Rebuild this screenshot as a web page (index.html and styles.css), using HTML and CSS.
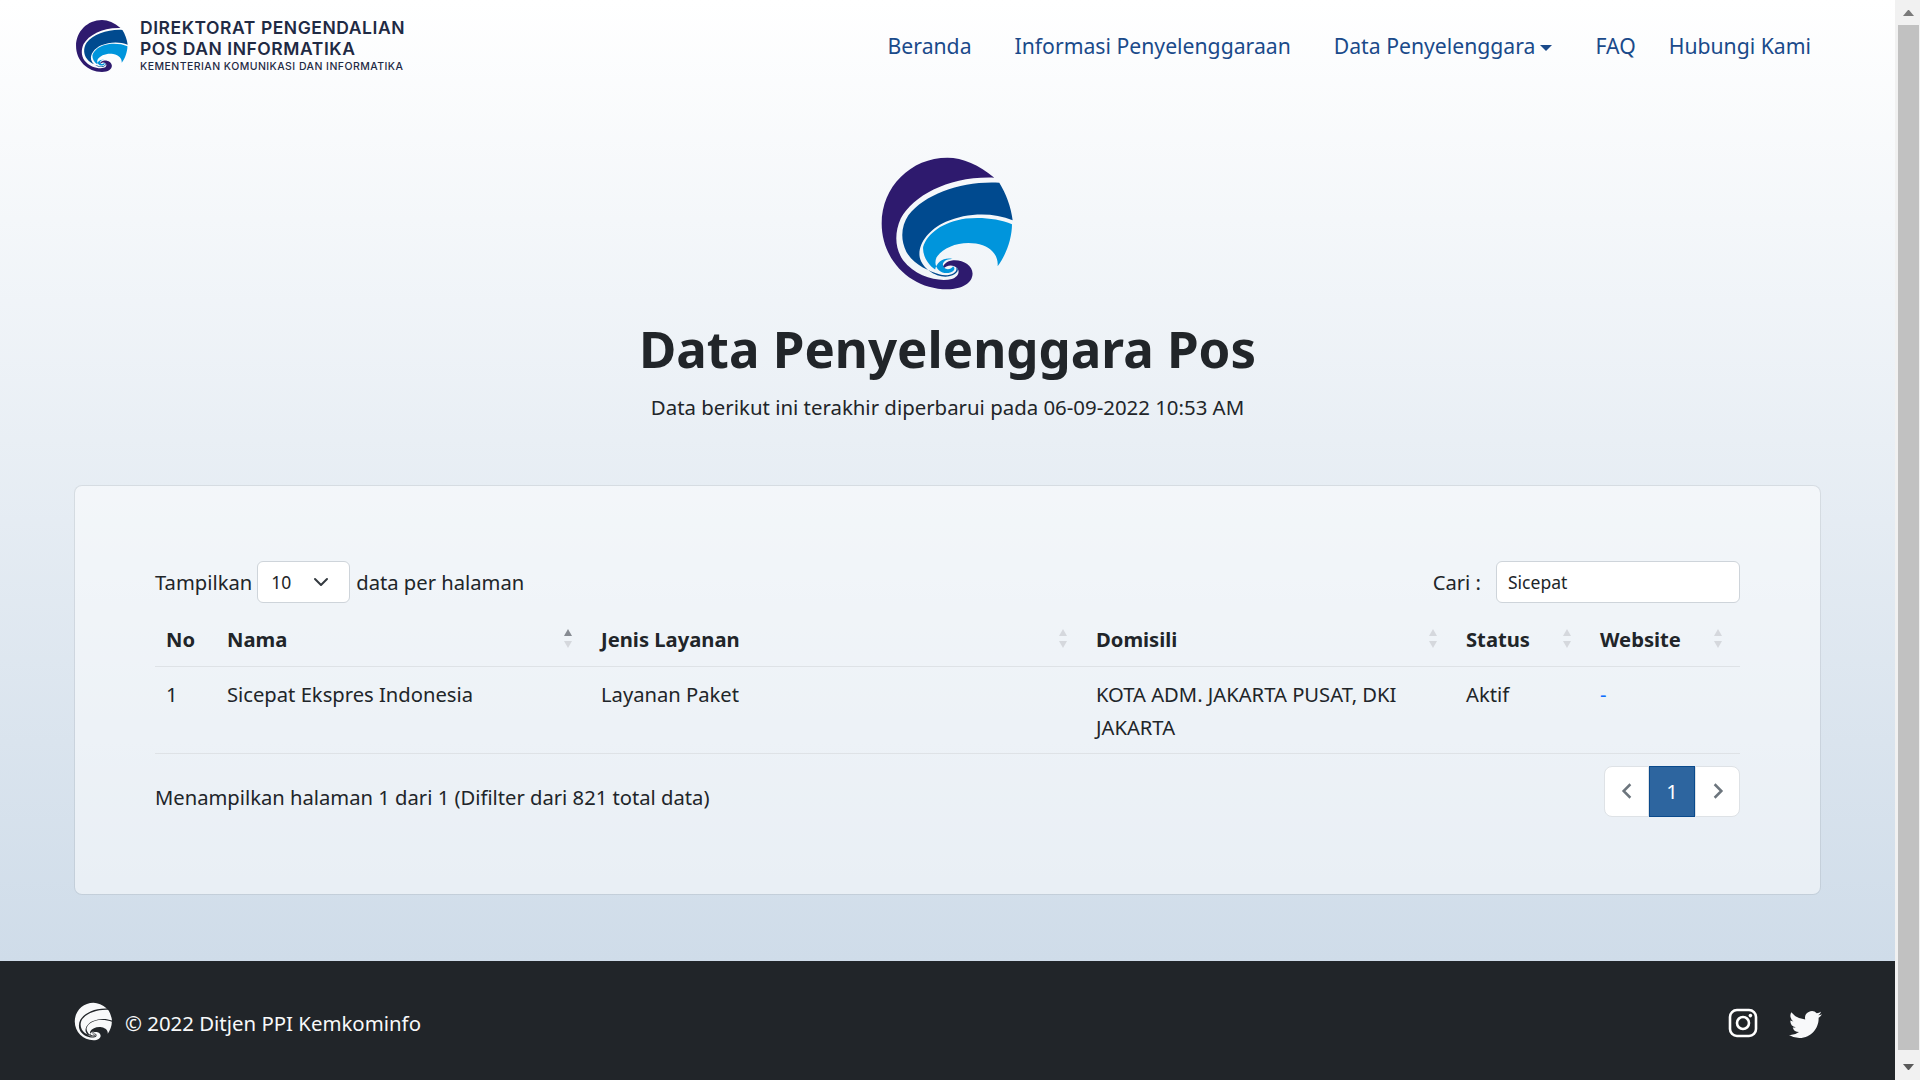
FILE: index.html
```html
<!DOCTYPE html>
<html lang="id">
<head>
  <meta charset="UTF-8" />
  <meta name="viewport" content="width=device-width, initial-scale=1.0"/>
  <title>Data Penyelenggara Pos</title>
  <link rel="stylesheet" href="styles.css">
</head>
<body>
  <svg class="defs" width="0" height="0">
    <symbol id="kominfo" viewBox="60 45 410 410">
      <path class="mark-a" d="M405 113C360 75 310 53 265 53C155 53 68 140 68 250C68 360 155 447 265 447C310 447 340 428 340 400C340 375 312 358 282 360C262 362 250 374 250 388C262 374 280 372 292 382C304 392 298 410 278 416C240 426 170 410 132 360C108 325 105 280 125 235C165 165 270 108 405 113Z"/>
      <path class="mark-b" d="M420 128C440 160 455 200 460 240C400 215 320 218 260 245C205 270 175 315 182 352C192 392 245 420 280 405C298 397 300 385 290 380C300 395 270 412 240 402C210 392 165 375 142 335C122 295 128 255 148 225C200 160 310 122 420 128Z"/>
      <path class="mark-c" d="M458 252C458 295 440 345 415 378C418 345 395 318 350 310C300 302 250 322 232 352C220 380 245 402 268 398C285 395 290 385 282 378C275 388 262 390 255 382C245 372 255 355 280 356C255 350 232 365 228 388C205 372 190 345 192 320C205 280 250 245 320 235C370 230 420 236 458 252Z"/>
    </symbol>
  </svg>

  <div class="page">
    <nav class="navbar">
      <a class="brand" href="#">
        <svg class="brand-logo"><use href="#kominfo"/></svg>
        <span class="brand-text">
          <span class="brand-title">DIREKTORAT PENGENDALIAN</span>
          <span class="brand-title">POS DAN INFORMATIKA</span>
          <span class="brand-sub">KEMENTERIAN KOMUNIKASI DAN INFORMATIKA</span>
        </span>
      </a>
      <ul class="nav-links">
        <li><a href="#">Beranda</a></li>
        <li><a href="#">Informasi Penyelenggaraan</a></li>
        <li><a href="#" class="dropdown">Data Penyelenggara</a></li>
        <li><a href="#">FAQ</a></li>
        <li class="nav-last"><a href="#">Hubungi Kami</a></li>
      </ul>
    </nav>

    <main class="content">
      <header class="hero">
        <svg class="hero-logo"><use href="#kominfo"/></svg>
        <h1>Data Penyelenggara Pos</h1>
        <p>Data berikut ini terakhir diperbarui pada 06-09-2022 10:53 AM</p>
      </header>

      <section class="card">
        <div class="toolbar">
          <label class="length">Tampilkan
            <span class="select">10
              <svg viewBox="0 0 16 16" width="16" height="16"><path d="M2 5l6 6 6-6" fill="none" stroke="#343a40" stroke-width="2" stroke-linecap="round" stroke-linejoin="round"/></svg>
            </span>
            data per halaman</label>
          <label class="search">Cari :
            <input type="text" value="Sicepat" />
          </label>
        </div>

        <table>
          <colgroup>
            <col class="c-no"><col class="c-nama"><col class="c-jenis"><col class="c-dom"><col class="c-status"><col class="c-web">
          </colgroup>
          <thead>
            <tr>
              <th>No</th>
              <th class="sort asc">Nama</th>
              <th class="sort">Jenis Layanan</th>
              <th class="sort">Domisili</th>
              <th class="sort">Status</th>
              <th class="sort">Website</th>
            </tr>
          </thead>
          <tbody>
            <tr>
              <td>1</td>
              <td>Sicepat Ekspres Indonesia</td>
              <td>Layanan Paket</td>
              <td>KOTA ADM. JAKARTA PUSAT, DKI JAKARTA</td>
              <td>Aktif</td>
              <td><a href="#">-</a></td>
            </tr>
          </tbody>
        </table>

        <div class="table-foot">
          <span class="info">Menampilkan halaman 1 dari 1 (Difilter dari 821 total data)</span>
          <div class="pagination">
            <a href="#" class="pg"><svg viewBox="0 0 16 16" width="18" height="18"><path d="M11 2L5 8l6 6" fill="none" stroke="#6c757d" stroke-width="2.2"/></svg></a>
            <a href="#" class="pg active">1</a>
            <a href="#" class="pg"><svg viewBox="0 0 16 16" width="18" height="18"><path d="M5 2l6 6-6 6" fill="none" stroke="#6c757d" stroke-width="2.2"/></svg></a>
          </div>
        </div>
      </section>
    </main>

    <footer class="footer">
      <div class="copy">
        <svg class="footer-logo"><use href="#kominfo"/></svg>
        <span>© 2022 Ditjen PPI Kemkominfo</span>
      </div>
      <div class="social">
        <svg viewBox="0 0 30 30" width="30" height="30"><rect x="2" y="2" width="26" height="26" rx="7" fill="none" stroke="#fff" stroke-width="2.6"/><circle cx="15" cy="15" r="6" fill="none" stroke="#fff" stroke-width="2.6"/><circle cx="22.4" cy="7.6" r="1.8" fill="#fff"/></svg>
        <svg viewBox="0 0 16 16" width="33" height="33"><path fill="#f8f9fa" d="M5.026 15c6.038 0 9.341-5.003 9.341-9.334 0-.14 0-.282-.006-.422A6.685 6.685 0 0 0 16 3.542a6.658 6.658 0 0 1-1.889.518 3.301 3.301 0 0 0 1.447-1.817 6.533 6.533 0 0 1-2.087.793A3.286 3.286 0 0 0 7.875 6.03a9.325 9.325 0 0 1-6.767-3.429 3.289 3.289 0 0 0 1.018 4.382A3.323 3.323 0 0 1 .64 6.575v.045a3.288 3.288 0 0 0 2.632 3.218 3.203 3.203 0 0 1-.865.115 3.23 3.23 0 0 1-.614-.057 3.283 3.283 0 0 0 3.067 2.277A6.588 6.588 0 0 1 .78 13.58a6.32 6.32 0 0 1-.78-.045A9.344 9.344 0 0 0 5.026 15z"/></svg>
      </div>
    </footer>
  </div>

  <div class="scrollbar">
    <span class="arrow up"></span>
    <span class="thumb"></span>
    <span class="arrow down"></span>
  </div>
</body>
</html>
```

FILE: styles.css
```css
* {
  box-sizing: border-box;
}

html, body {
  height: 100%;
}

body {
  margin: 0;
  display: flex;
  overflow: hidden;
  font-family: 'Noto Sans', 'Open Sans', sans-serif;
  font-size: 20.2px;
  color: #212529;
}

a {
  text-decoration: none;
}

.defs {
  position: absolute;
}

.page {
  flex: 1;
  min-width: 0;
  display: flex;
  flex-direction: column;
  background: linear-gradient(180deg, #ffffff 0, #cfdce9 961px);
}

/* navbar */
.navbar {
  height: 90px;
  padding: 1px 74px 0 75px;
  display: flex;
  align-items: center;
  justify-content: space-between;
}

.brand {
  display: flex;
  align-items: center;
  gap: 11px;
  color: #1f2a44;
}

.brand-logo {
  width: 54px;
  height: 54px;
}

.brand-text {
  display: flex;
  flex-direction: column;
  font-family: 'Inter', sans-serif;
}

.brand-title {
  font-size: 17.5px;
  font-weight: 600;
  line-height: 21px;
  letter-spacing: 0.55px;
}

.brand-sub {
  font-size: 10.5px;
  font-weight: 500;
  line-height: 16px;
  letter-spacing: 0.45px;
}

.nav-links {
  display: flex;
  align-items: center;
  list-style: none;
  margin: 0;
  padding: 0 10px 0 0;
  gap: 43px;
}

.nav-links a {
  color: #1a4a8a;
  font-size: 21.2px;
}

.nav-last {
  margin-left: -10px;
}

.dropdown::after {
  content: "";
  display: inline-block;
  margin-left: 5px;
  vertical-align: 3px;
  border-top: 6px solid;
  border-left: 6px solid transparent;
  border-right: 6px solid transparent;
}

/* hero */
.content {
  flex: 1;
  padding: 0 74px;
}

.hero {
  text-align: center;
  padding-top: 65px;
}

.hero-logo {
  display: block;
  width: 137px;
  height: 137px;
  margin: 0 auto;
}

h1 {
  margin: 24px 0 0;
  font-size: 51px;
  font-weight: 700;
  line-height: 64px;
}

.hero p {
  margin: 12px 0 0;
  font-size: 20.4px;
  line-height: 30px;
}

/* card */
.card {
  margin-top: 63px;
  height: 410px;
  padding: 75px 80px 0;
  border: 1px solid rgba(0, 0, 0, 0.07);
  border-radius: 8px;
  background-color: rgba(255, 255, 255, 0.5);
  background-clip: padding-box;
}

.toolbar {
  height: 42px;
  display: flex;
  align-items: center;
  justify-content: space-between;
}

.length, .search {
  display: flex;
  align-items: center;
}

.select {
  width: 93px;
  height: 42px;
  margin: 0 6px 0 5px;
  padding: 0 20px 0 13px;
  display: flex;
  align-items: center;
  justify-content: space-between;
  background: #fff;
  border: 1px solid #ced4da;
  border-radius: 6px;
  font-size: 17.5px;
}

.search input {
  width: 244px;
  height: 42px;
  margin-left: 15px;
  padding: 0 11px;
  background: #fff;
  border: 1px solid #ced4da;
  border-radius: 6px;
  font: inherit;
  font-size: 17.5px;
  color: #212529;
}

table {
  width: 100%;
  margin-top: 12px;
  border-collapse: collapse;
  table-layout: fixed;
}

.c-no { width: 61px; }
.c-nama { width: 374px; }
.c-jenis { width: 495px; }
.c-dom { width: 370px; }
.c-status { width: 134px; }

th {
  height: 51px;
  padding: 0 11px 2px;
  text-align: left;
  font-weight: 700;
  border-bottom: 1px solid #dee2e6;
}

td {
  padding: 11px 11px 9px;
  line-height: 33px;
  vertical-align: top;
  border-bottom: 1px solid #dee2e6;
}

td a {
  color: #0d6efd;
}

.sort {
  position: relative;
}

.sort::before, .sort::after {
  content: "";
  position: absolute;
  right: 18px;
  border-left: 4px solid transparent;
  border-right: 4px solid transparent;
}

.sort::before {
  top: 14px;
  border-bottom: 7px solid #d5d8dd;
}

.sort::after {
  top: 26px;
  border-top: 7px solid #d5d8dd;
}

.asc::before {
  border-bottom-color: #868b92;
}

.table-foot {
  margin-top: 12px;
  display: flex;
  justify-content: space-between;
}

.info {
  margin-top: 17px;
}

.pagination {
  display: flex;
  height: 51px;
}

.pg {
  width: 45px;
  display: flex;
  align-items: center;
  justify-content: center;
  background: #fff;
  border: 1px solid #dee2e6;
  color: #fff;
}

.pg:first-child {
  border-radius: 8px 0 0 8px;
}

.pg:last-child {
  border-radius: 0 8px 8px 0;
}

.active {
  width: 46px;
  background: #2d659f;
  border-color: #0a4a8c;
}

/* footer */
.footer {
  height: 119px;
  padding: 5px 73px 0 74px;
  display: flex;
  align-items: center;
  justify-content: space-between;
  background: #212529;
  color: #f8f9fa;
}

.copy {
  display: flex;
  align-items: center;
  gap: 12px;
  font-size: 20.4px;
}

.footer-logo {
  width: 39px;
  height: 39px;
  margin-top: -3px;
  --a: #f8f9fa;
  --b: #f8f9fa;
  --c: #f8f9fa;
}

.social {
  display: flex;
  align-items: center;
  gap: 31px;
}

/* logo colours */
.mark-a { fill: var(--a, #2e1a6e); }
.mark-b { fill: var(--b, #004a8f); }
.mark-c { fill: var(--c, #0095dc); }

/* window scrollbar */
.scrollbar {
  width: 25px;
  display: flex;
  flex-direction: column;
  align-items: center;
  background: #f1f1f1;
}

.thumb {
  width: 21px;
  height: 1025px;
  margin-left: 2px;
  background: #c1c1c1;
}

.arrow {
  height: 25px;
  width: 11px;
  border-left: 5.5px solid transparent;
  border-right: 5.5px solid transparent;
}

.up {
  height: 6px;
  margin: 10px 0 9px 2px;
  border-bottom: 6px solid #7a7a7a;
}

.down {
  height: 6px;
  margin: 14px 0 0 2px;
  border-top: 6px solid #5a5a5a;
}
```
